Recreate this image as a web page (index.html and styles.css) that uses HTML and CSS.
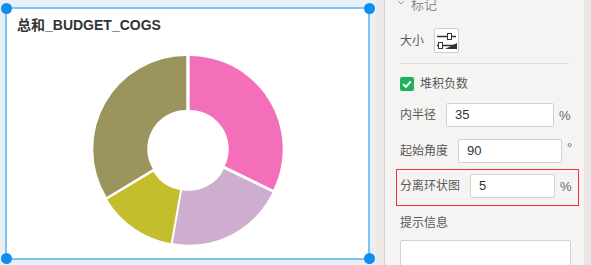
FILE: index.html
```html
<!DOCTYPE html>
<html>
<head>
<meta charset="UTF-8">
<title>总和_BUDGET_COGS</title>
<link rel="stylesheet" href="styles.css">
</head>
<body>
<div class="canvas">
  <div class="widget">
    <div class="widget-title">总和_BUDGET_COGS</div>
    <svg class="chart" width="361" height="249" viewBox="7 9 361 249">
      <path fill="#f46fba" d="M189.7 55.94 A93 93 0 0 1 273.29 189.71 L224.75 166.04 A39 39 0 0 0 189.7 109.94 Z"/>
      <path fill="#cfadcf" d="M272.5 192.55 A93 93 0 0 1 172.76 243.37 L182.14 190.19 A39 39 0 0 0 223.96 168.88 Z"/>
      <path fill="#c4be2c" d="M170.72 243.24 A93 93 0 0 1 107.15 199.55 L153.44 171.74 A39 39 0 0 0 180.1 190.06 Z"/>
      <path fill="#9b955d" d="M106.54 196.92 A93 93 0 0 1 186.26 56.02 L186.26 110.02 A39 39 0 0 0 152.83 169.11 Z"/>
    </svg>
    <span class="handle tl"></span>
    <span class="handle tr"></span>
    <span class="handle bl"></span>
    <span class="handle br"></span>
  </div>
</div>
<div class="gutter"></div>
<div class="panel">
  <div class="section-head">
    <svg width="8" height="6" viewBox="0 0 8 6"><path d="M1 1 L4 4 L7 1" fill="none" stroke="#999" stroke-width="1"/></svg>
    <span>标记</span>
  </div>

  <div class="row row-size">
    <span class="label">大小</span>
    <span class="icon-btn">
      <svg width="25" height="25" viewBox="0 0 25 25">
        <path d="M3 8.5 H22 M3 17.5 H22" stroke="#333" stroke-width="1.4"/>
        <rect x="13.5" y="5.5" width="4" height="6" fill="#fff" stroke="#333"/>
        <rect x="4.5" y="14.5" width="4" height="6" fill="#fff" stroke="#333"/>
        <path d="M11 21 L23 21 L23 15 Z" fill="#333"/>
      </svg>
    </span>
  </div>

  <div class="divider"></div>

  <div class="row row-check">
    <span class="checkbox">
      <svg width="14" height="14" viewBox="0 0 14 14"><path d="M3.2 7.2 L6 9.8 L10.8 4.4" fill="none" stroke="#fff" stroke-width="2"/></svg>
    </span>
    <span class="label">堆积负数</span>
  </div>

  <div class="row row-field">
    <span class="label">内半径</span>
    <span class="input w-inner">35</span>
    <span class="unit">%</span>
  </div>

  <div class="row row-field">
    <span class="label">起始角度</span>
    <span class="input w-angle">90</span>
    <span class="unit unit-deg">°</span>
  </div>

  <div class="highlight">
    <div class="row">
      <span class="label">分离环状图</span>
      <span class="input w-split">5</span>
      <span class="unit">%</span>
    </div>
  </div>

  <div class="label tip-label">提示信息</div>
  <div class="textarea"></div>
</div>
<div class="scroll"></div>
</body>
</html>
```
FILE: styles.css
```css
html, body {
  margin: 0;
  height: 265px;
  overflow: hidden;
}
body {
  display: flex;
  font-family: "Liberation Sans", "Noto Sans CJK SC", sans-serif;
}

/* canvas */
.canvas {
  width: 376px;
  flex: none;
  background: #e9eff4;
}
.widget {
  position: relative;
  display: grid;
  width: 361px;
  height: 249px;
  margin: 7px 0 0 5px;
  border: 2px solid #7cc4f4;
  background: #fff;
}
.widget-title,
.chart {
  grid-area: 1 / 1;
}
.widget-title {
  padding: 7px 10px;
  line-height: 18px;
  font-size: 14px;
  font-weight: bold;
  color: #333;
}
.chart {
  display: block;
}
.handle {
  position: absolute;
  width: 11px;
  height: 11px;
  border-radius: 50%;
  background: #0f8ef0;
}
.handle.tl { left: -6.5px; top: -6.5px; }
.handle.tr { right: -6.5px; top: -6.5px; }
.handle.bl { left: -6.5px; bottom: -5.5px; }
.handle.br { right: -6.5px; bottom: -5.5px; }

.gutter {
  width: 8px;
  flex: none;
  background: #ebe8e5;
  border-right: 1px solid #d3cfcb;
}

/* panel */
.panel {
  width: 184px;
  height: 265px;
  overflow: hidden;
  flex: none;
  padding-left: 15px;
  background: #f5f4f2;
  font-size: 12px;
  color: #595959;
}
.scroll {
  width: 7px;
  flex: none;
  background: #e9e7e5;
}
.section-head {
  display: flex;
  align-items: center;
  gap: 6px;
  margin: -5px 0 0 -3px;
  height: 16px;
  font-size: 13px;
  color: #8c8c8c;
}
.row {
  display: flex;
  align-items: center;
}
.label {
  line-height: 16px;
}
.row .label + .icon-btn,
.row .label + .input {
  margin-left: 10px;
}
.row-size {
  margin-top: 17px;
}
.icon-btn {
  display: block;
  width: 25px;
  height: 25px;
  box-sizing: border-box;
  border: 1px solid #cfccc9;
  border-radius: 2px;
  background: #fff;
}
.icon-btn svg {
  display: block;
  margin: -1px;
}
.divider {
  width: 169px;
  height: 1px;
  margin-top: 10px;
  background: #dedbd8;
}
.row-check {
  margin-top: 12px;
  gap: 6px;
}
.checkbox {
  display: block;
  width: 14px;
  height: 14px;
  border-radius: 2px;
  background: #1db35c;
}
.checkbox svg {
  display: block;
}
.row-field {
  margin-top: 11px;
}
.row-field + .row-field {
  margin-top: 12px;
}
.input {
  box-sizing: border-box;
  height: 24px;
  line-height: 22px;
  padding-left: 8px;
  border: 1px solid #d4d1ce;
  border-radius: 2px;
  background: #fff;
  font-size: 13px;
  color: #333;
}
.w-inner { width: 108px; }
.w-angle { width: 104px; }
.w-split { width: 85px; }
.unit {
  margin-left: 5px;
  font-size: 13px;
  color: #666;
}
.unit-deg {
  align-self: flex-start;
  margin-top: 1px;
}
.highlight {
  width: 178px;
  margin: 6px 0 0 -4px;
  padding: 4px 0 7px 3px;
  border: 1px solid #f0333a;
}
.tip-label {
  margin-top: 9px;
}
.textarea {
  box-sizing: border-box;
  width: 171px;
  height: 40px;
  margin-top: 9px;
  border: 1px solid #d4d1ce;
  border-radius: 2px;
  background: #fff;
}
```
